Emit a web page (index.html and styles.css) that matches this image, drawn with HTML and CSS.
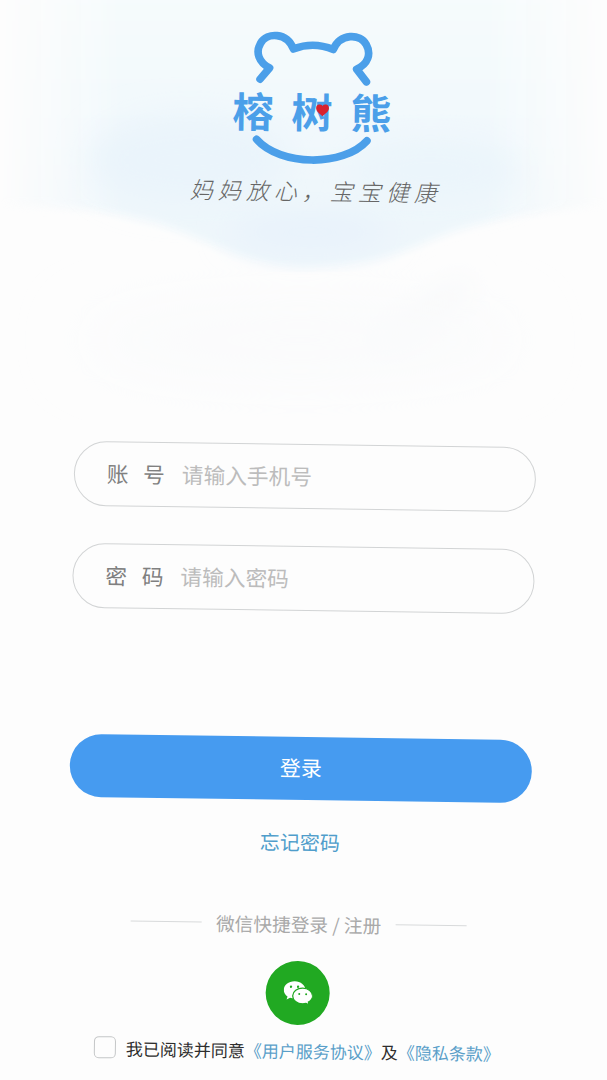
FILE: index.html
```html
<!DOCTYPE html>
<html lang="zh-CN">
<head>
    <meta charset="UTF-8">
    <title>榕树熊</title>
    <link rel="stylesheet" href="styles.css">
</head>
<body>
    <div class="page">
        <svg class="hero-bg" viewBox="0 0 607 420" width="607" height="420">
            <defs>
                <filter id="soft" x="-30%" y="-50%" width="160%" height="200%"><feGaussianBlur stdDeviation="16"/></filter>
                <filter id="softer" x="-20%" y="-50%" width="140%" height="200%"><feGaussianBlur stdDeviation="30"/></filter>
                <filter id="edge" x="-5%" y="-5%" width="110%" height="110%"><feGaussianBlur stdDeviation="4"/></filter>
                <linearGradient id="sky" x1="0" y1="0" x2="0" y2="1">
                    <stop offset="0" stop-color="#f6fbfd"/>
                    <stop offset="1" stop-color="#edf6fb"/>
                </linearGradient>
                <linearGradient id="fade" x1="0" y1="0" x2="1" y2="0">
                    <stop offset="0" stop-color="#000"/>
                    <stop offset="0.2" stop-color="#fff"/>
                    <stop offset="0.8" stop-color="#fff"/>
                    <stop offset="1" stop-color="#000"/>
                </linearGradient>
                <mask id="sides"><rect width="607" height="420" fill="url(#fade)"/></mask>
            </defs>
            <g mask="url(#sides)">
                <path d="M-10 -20H617V205C520 212 470 222 420 245C380 262 340 268 300 268C250 266 210 242 160 224C110 210 70 206 -10 206Z" fill="url(#sky)" filter="url(#edge)"/>
            </g>
            <ellipse cx="190" cy="160" rx="100" ry="45" fill="#eaf4fb" filter="url(#soft)"/>
            <ellipse cx="430" cy="170" rx="90" ry="32" fill="#ebf5fb" filter="url(#soft)"/>
            <ellipse cx="310" cy="232" rx="80" ry="20" fill="#e8f2fb" filter="url(#soft)"/>
            <path d="M380 345C420 320 440 300 470 285" stroke="#f3f5f8" stroke-width="14" fill="none" filter="url(#soft)"/>
            <ellipse cx="300" cy="340" rx="220" ry="40" fill="#fafbfc" filter="url(#softer)"/>
        </svg>

        <div class="content">
            <div class="logo">
                <svg class="logo-ears" viewBox="240 25 370 170" width="123" height="57">
                    <path d="M266 180L294 146C262 130 250 100 266 72C285 38 345 38 365 88C405 72 445 72 485 88C505 38 565 38 584 72C600 100 590 130 556 146L586 184" fill="none" stroke="#4b9fe9" stroke-width="23" stroke-linecap="round" stroke-linejoin="round"/>
                </svg>
                <div class="logo-name">榕树熊<span class="logo-heart"><svg viewBox="0 0 14 13" width="13" height="12"><path d="M7 13C3 9.500 0 7.500 0 4C0 1.500 2 0 3.800 0C5.200 0 6.300 .8 7 2C7.700 .8 8.800 0 10.200 0C12 0 14 1.500 14 4C14 7.500 11 9.500 7 13Z" fill="#d8222e"/></svg></span></div>
                <svg class="logo-smile" viewBox="240 345 370 90" width="123" height="30">
                    <path d="M258 360C330 440 520 440 590 360" fill="none" stroke="#4b9fe9" stroke-width="23" stroke-linecap="round"/>
                </svg>
            </div>
            <div class="slogan">妈妈放心，宝宝健康</div>

            <div class="field field-first">
                <span class="field-label">账<i></i>号</span>
                <span class="field-hint">请输入手机号</span>
            </div>
            <div class="field">
                <span class="field-label">密<i></i>码</span>
                <span class="field-hint">请输入密码</span>
            </div>

            <button class="login-btn">登录</button>
            <a class="forgot">忘记密码</a>

            <div class="divider">
                <span class="divider-line"></span>
                <span class="divider-text">微信快捷登录 / 注册</span>
                <span class="divider-line"></span>
            </div>

            <div class="wechat">
                <svg viewBox="0 0 32 26" width="29" height="24">
                    <path d="M12 0C5.400 0 0 4.300 0 9.700C0 12.700 1.700 15.300 4.300 17.100L3.300 20.400L7.100 18.400C8.600 18.900 10.300 19.300 12 19.300C18.600 19.300 24 15 24 9.700C24 4.300 18.600 0 12 0Z" fill="#fff"/>
                    <path d="M21 7.500C14.900 7.500 10 11.400 10 16.200C10 21 14.900 24.900 21 24.900C22.300 24.900 23.600 24.700 24.800 24.300L28.300 26L27.400 23C30.200 21.400 32 19 32 16.200C32 11.400 27.100 7.500 21 7.500Z" fill="#fff" stroke="#21a922" stroke-width="1.400"/>
                    <circle cx="8" cy="6.200" r="1.300" fill="#21a922"/>
                    <circle cx="15.800" cy="6.200" r="1.300" fill="#21a922"/>
                    <circle cx="17.200" cy="14.200" r="1.100" fill="#21a922"/>
                    <circle cx="24.800" cy="14.200" r="1.100" fill="#21a922"/>
                </svg>
            </div>

            <div class="agree">
                <span class="agree-box"></span>
                <span class="agree-text">我已阅读并同意<a>《用户服务协议》</a>及<a>《隐私条款》</a></span>
            </div>
        </div>
    </div>
</body>
</html>
```

FILE: styles.css
```css
* {
    box-sizing: border-box;
}
html, body {
    margin: 0;
    padding: 0;
}
body {
    font-family: "Noto Sans CJK SC", "Noto Sans", sans-serif;
    background: #fdfdfd;
}
.page {
    position: relative;
    width: 607px;
    height: 1080px;
    overflow: hidden;
    background: #fdfdfd;
}
.hero-bg {
    position: absolute;
    top: 0;
    left: 0;
}
.content {
    position: relative;
    width: 607px;
    height: 1080px;
    padding: 28px 0 0 1px;
    display: flex;
    flex-direction: column;
    align-items: center;
    transform: rotate(0.8deg);
    transform-origin: 304px 540px;
}
.logo {
    display: flex;
    flex-direction: column;
    align-items: center;
    height: 137px;
    margin-left: 4px;
}
.logo-ears,
.logo-smile {
    display: block;
    flex: none;
}
.logo-name {
    position: relative;
    height: 50px;
    padding-left: 18px;
    font-size: 41px;
    line-height: 50px;
    font-weight: 700;
    letter-spacing: 18px;
    color: #4b9fe9;
    white-space: nowrap;
}
.logo-heart {
    position: absolute;
    top: 13px;
    left: 101px;
    line-height: 0;
}
.slogan {
    margin: 8px 0 0 14px;
    height: 34px;
    font-size: 23px;
    line-height: 34px;
    font-weight: 300;
    font-style: italic;
    letter-spacing: 5px;
    color: #666;
    white-space: nowrap;
}
.field {
    display: flex;
    align-items: center;
    flex: none;
    width: 462px;
    height: 65px;
    margin-top: 37px;
    padding: 0 0 2px 32px;
    border: 1px solid #d2d4d5;
    border-radius: 33px;
    font-size: 21.700px;
}
.field-first {
    margin-top: 237px;
}
.field-label {
    display: flex;
    justify-content: space-between;
    width: 58px;
    color: #808080;
}
.field-label i {
    display: block;
}
.field-hint {
    margin-left: 17px;
    color: #bcbcbc;
}
.login-btn {
    display: block;
    flex: none;
    width: 462px;
    height: 63px;
    margin-top: 126px;
    padding: 0 0 3px;
    border: 0;
    border-radius: 32px;
    background: #469bf0;
    color: #fff;
    font-family: inherit;
    font-size: 21px;
}
.forgot {
    margin-top: 27px;
    font-size: 20px;
    line-height: 30px;
    color: #4f9dcb;
}
.divider {
    display: flex;
    align-items: center;
    gap: 14px;
    margin-top: 51px;
    height: 30px;
}
.divider-line {
    width: 71px;
    height: 1px;
    background: #d8dadb;
}
.divider-text {
    font-size: 18.700px;
    color: #a9a9a9;
    white-space: nowrap;
}
.wechat {
    display: flex;
    align-items: center;
    justify-content: center;
    flex: none;
    width: 64px;
    height: 64px;
    margin-top: 23px;
    border-radius: 50%;
    background: #21a922;
}
.agree {
    display: flex;
    align-items: center;
    gap: 10px;
    margin-top: 10px;
    height: 30px;
}
.agree-box {
    flex: none;
    width: 22px;
    height: 22px;
    border: 1px solid #c4c6c7;
    border-radius: 5px;
    background: #fdfdfd;
}
.agree-text {
    font-size: 17px;
    color: #2e2e2e;
    white-space: nowrap;
}
.agree-text a {
    color: #5a9fc9;
}
```
